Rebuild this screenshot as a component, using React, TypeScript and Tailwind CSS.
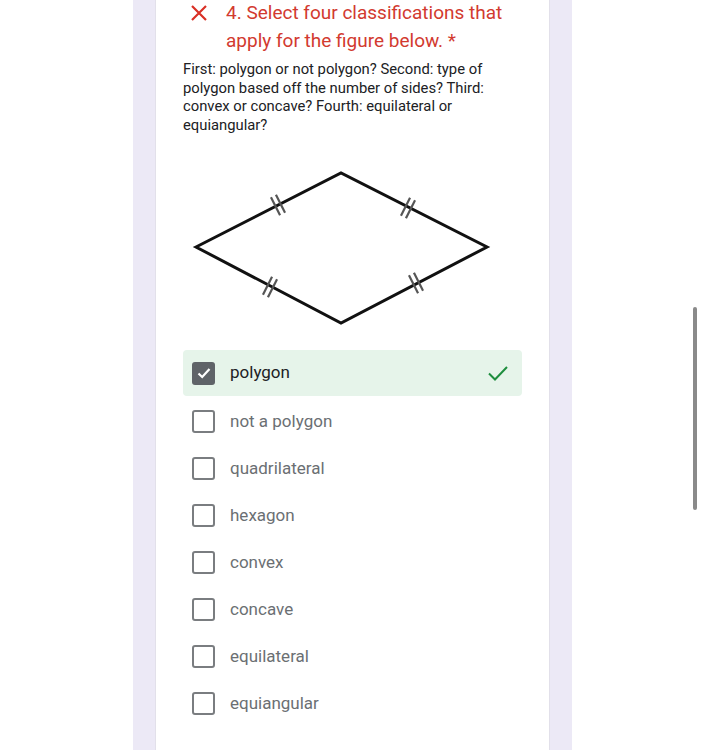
import React from 'react'

const options = [
  'not a polygon',
  'quadrilateral',
  'hexagon',
  'convex',
  'concave',
  'equilateral',
  'equiangular',
]

function Ticks({ x, y, dx, dy }: { x: number; y: number; dx: number; dy: number }) {
  // dx, dy: unit vector along the side
  const px = -dy
  const py = dx
  const len = 10
  const gap = 2.8
  const lines = [-gap, gap].map((o) => ({
    x1: x + dx * o - px * len,
    y1: y + dy * o - py * len,
    x2: x + dx * o + px * len,
    y2: y + dy * o + py * len,
  }))
  return (
    <g stroke="#555" strokeWidth={2.2}>
      {lines.map((l, i) => (
        <line key={i} {...l} />
      ))}
    </g>
  )
}

function Rhombus() {
  const a = 0.891
  const b = 0.455
  return (
    <svg width="320" height="170" viewBox="0 0 320 170" className="block">
      <polygon
        points="16,86 161,12 307,86 161,162"
        fill="none"
        stroke="#111"
        strokeWidth={3}
        strokeLinejoin="miter"
      />
      <Ticks x={98} y={44} dx={a} dy={-b} />
      <Ticks x={228} y={47} dx={a} dy={b} />
      <Ticks x={90} y={126} dx={a} dy={b} />
      <Ticks x={236} y={122} dx={a} dy={-b} />
    </svg>
  )
}

export default function App() {
  return (
    <div className="relative w-[704px] h-[751px] overflow-hidden bg-white font-['Roboto',sans-serif]">
      <div className="ml-[133px] w-[439px] h-full bg-[#ece9f6] px-[22px]">
        <div className="h-full bg-white border-x border-[#e2e0ea] pl-[27px] pr-[27px]">
          <div className="flex -mt-[1px]">
            <div className="w-[43px] shrink-0 pt-[5px] pl-[7px]">
              <svg width="18" height="18" viewBox="0 0 18 18">
                <path d="M2 2 L16 16 M16 2 L2 16" stroke="#d93025" strokeWidth={2.2} fill="none" />
              </svg>
            </div>
            <div className="text-[19px] leading-[28px] text-[#d23a2f]">
              4. Select four classifications that apply for the figure below. *
            </div>
          </div>
          <p className="mt-[5px] text-[14.8px] leading-[18.5px] text-[#202124] pr-[20px]">
            First: polygon or not polygon? Second: type of polygon based off the number of sides? Third:
            convex or concave? Fourth: equilateral or equiangular?
          </p>
          <div className="mt-[27px] -ml-[3px]">
            <Rhombus />
          </div>
          <div className="mt-[19px] flex flex-col">
            <div className="h-[46px] rounded-[4px] bg-[#e6f4ea] flex items-center pl-[9px] pr-[12px]">
              <div className="w-[23px] h-[23px] rounded-[3px] bg-[#5f6368] flex items-center justify-center">
                <svg width="16" height="16" viewBox="0 0 16 16">
                  <path d="M2.5 8.5 L6.2 12 L13.5 4" stroke="white" strokeWidth={2.2} fill="none" />
                </svg>
              </div>
              <span className="ml-[15px] text-[17px] text-[#202124]">polygon</span>
              <svg className="ml-auto" width="24" height="24" viewBox="0 0 24 24">
                <path d="M3 12.5 L9 18.5 L21 6" stroke="#1e8e3e" strokeWidth={2} fill="none" />
              </svg>
            </div>
            <div className="mt-[2px] flex flex-col">
              {options.map((o) => (
                <div key={o} className="h-[47px] flex items-center pl-[9px]">
                  <div className="w-[23px] h-[23px] rounded-[3px] border-2 border-[#7a7d80]" />
                  <span className="ml-[15px] text-[17px] text-[#6b6f73]">{o}</span>
                </div>
              ))}
            </div>
          </div>
        </div>
      </div>
      <div className="absolute left-[693px] top-[307px] w-[4px] h-[203px] rounded-full bg-[#8a8a8a]" />
    </div>
  )
}
